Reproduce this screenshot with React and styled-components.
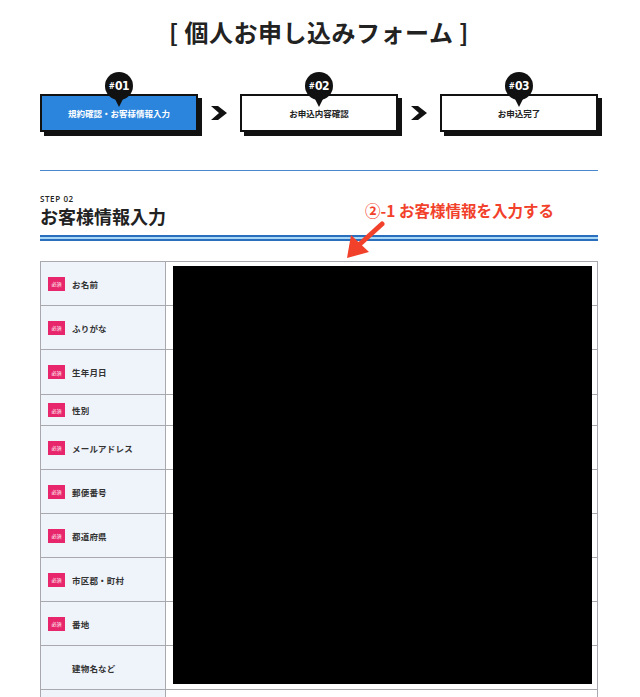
import styled, { createGlobalStyle } from 'styled-components';

const GlobalStyle = createGlobalStyle`
  html, body {
    margin: 0;
    padding: 0;
    overflow: hidden;
    background: #fff;
  }
  body {
    font-family: "Noto Sans CJK JP", "Noto Sans", sans-serif;
    color: #222;
  }
`;

const Page = styled.div`
  padding: 16px 42px 0 40px;
`;

const Title = styled.h1`
  margin: 0;
  font-size: 24px;
  line-height: 32px;
  font-weight: 700;
  text-align: center;
  letter-spacing: 0.5px;
`;

const Steps = styled.div`
  display: grid;
  grid-template-columns: 1fr 42px 1fr 42px 1fr;
  align-items: center;
  margin-top: 46px;
`;

const StepBox = styled.div`
  position: relative;
  height: 38px;
  box-sizing: border-box;
  border: 2px solid #111;
  background: ${({ $active }) => ($active ? '#2c85dc' : '#fff')};
  color: ${({ $active }) => ($active ? '#fff' : '#222')};
  box-shadow: 4px 4px 0 #111;
  display: flex;
  align-items: center;
  justify-content: center;
  font-size: 8.5px;
  font-weight: 700;
`;

const StepNo = styled.div`
  position: absolute;
  top: -24px;
  left: 50%;
  transform: translateX(-50%);
  width: 28px;
  height: 28px;
  border-radius: 50%;
  background: #111;
  color: #fff;
  display: flex;
  align-items: center;
  justify-content: center;
  font-family: "DejaVu Sans Condensed", "DejaVu Sans", sans-serif;
  font-weight: 700;
  font-size: 12px;
  letter-spacing: -0.3px;

  &::after {
    content: '';
    position: absolute;
    bottom: -7px;
    left: 50%;
    margin-left: -4px;
    border-left: 4px solid transparent;
    border-right: 4px solid transparent;
    border-top: 8px solid #111;
  }

  small {
    font-size: 8px;
    margin-right: 0.5px;
  }
`;

const Chevron = styled.svg`
  justify-self: center;
  width: 16px;
  height: 14px;
`;

const Separator = styled.hr`
  margin: 38px 0 0;
  border: 0;
  border-top: 1px solid #4a87cc;
`;

const Heading = styled.div`
  position: relative;
  margin-top: 22px;
`;

const StepLabel = styled.div`
  font-family: "Open Sans", "Noto Sans", sans-serif;
  font-size: 8px;
  font-weight: 600;
  line-height: 11px;
  letter-spacing: 0.6px;
`;

const SectionTitle = styled.h2`
  margin: 0;
  font-size: 18px;
  line-height: 24px;
  font-weight: 700;
`;

const DoubleLine = styled.div`
  margin-top: 7px;
  height: 2px;
  border-top: 2px solid #2a6fbd;
  border-bottom: 2px solid #2a6fbd;
  background: #a8d8f5;
`;

const Note = styled.div`
  position: absolute;
  left: 325px;
  top: 6px;
  color: #f2412b;
  font-size: 15.5px;
  font-weight: 700;
  white-space: nowrap;
`;

const NoteArrow = styled.svg`
  position: absolute;
  left: 302px;
  top: 28px;
  width: 44px;
  height: 40px;
`;

const Table = styled.div`
  position: relative;
  margin-top: 20px;
  border: 1px solid #a8a8ae;
  border-bottom: 0;
`;

const Row = styled.div`
  display: grid;
  grid-template-columns: 125px 1fr;
  height: ${({ $h }) => $h}px;
  box-sizing: border-box;
  border-bottom: 1px solid #a8a8ae;
`;

const LabelCell = styled.div`
  display: flex;
  align-items: center;
  gap: 7px;
  padding-left: 7px;
  background: #eff4fb;
  border-right: 1px solid #a8a8ae;
  font-size: 8.5px;
  font-weight: 700;
  color: #333;
  letter-spacing: 0.2px;
`;

const Required = styled.span`
  display: inline-flex;
  align-items: center;
  justify-content: center;
  width: 17px;
  height: 14px;
  background: ${({ $hidden }) => ($hidden ? 'transparent' : '#e8266c')};
  color: #fff;
  font-size: 5px;
  font-weight: 400;
  letter-spacing: 0;
`;

const InputCell = styled.div`
  background: #fff;
`;

const Redaction = styled.div`
  position: absolute;
  left: 132px;
  top: 4px;
  width: 419px;
  height: 418px;
  background: #000;
`;

const steps = [
  { no: '01', label: '規約確認・お客様情報入力', active: true },
  { no: '02', label: 'お申込内容確認' },
  { no: '03', label: 'お申込完了' },
];

const rows = [
  { label: 'お名前', h: 44, req: true },
  { label: 'ふりがな', h: 44, req: true },
  { label: '生年月日', h: 45, req: true },
  { label: '性別', h: 31, req: true },
  { label: 'メールアドレス', h: 44, req: true },
  { label: '郵便番号', h: 44, req: true },
  { label: '都道府県', h: 44, req: true },
  { label: '市区郡・町村', h: 44, req: true },
  { label: '番地', h: 44, req: true },
  { label: '建物名など', h: 44, req: false },
  { label: '', h: 44, req: false },
];

const ChevronIcon = () => (
  <Chevron viewBox="0 0 16 14">
    <polygon points="0,0 7,0 16,7 7,14 0,14 8,7" fill="#111" />
  </Chevron>
);

export default function App() {
  return (
    <>
      <GlobalStyle />
      <Page>
        <Title>[ 個人お申し込みフォーム ]</Title>

        <Steps>
          {steps.map((s, i) => (
            <>
              {i > 0 && <ChevronIcon key={`c${i}`} />}
              <StepBox key={s.no} $active={s.active}>
                <StepNo>
                  <small>#</small>
                  {s.no}
                </StepNo>
                {s.label}
              </StepBox>
            </>
          ))}
        </Steps>

        <Separator />

        <Heading>
          <StepLabel>STEP 02</StepLabel>
          <SectionTitle>お客様情報入力</SectionTitle>
          <DoubleLine />
          <Note>②-1 お客様情報を入力する</Note>
          <NoteArrow viewBox="0 0 44 40">
            <line x1="40" y1="3" x2="18" y2="23" stroke="#f2412b" strokeWidth="5" strokeLinecap="round" />
            <polygon points="5,37 9,14 27,31" fill="#f2412b" />
          </NoteArrow>
        </Heading>

        <Table>
          {rows.map((r, i) => (
            <Row key={i} $h={r.h}>
              <LabelCell>
                {r.label && <Required $hidden={!r.req}>{r.req ? '必須' : ''}</Required>}
                {r.label}
              </LabelCell>
              <InputCell />
            </Row>
          ))}
          <Redaction />
        </Table>
      </Page>
    </>
  );
}
